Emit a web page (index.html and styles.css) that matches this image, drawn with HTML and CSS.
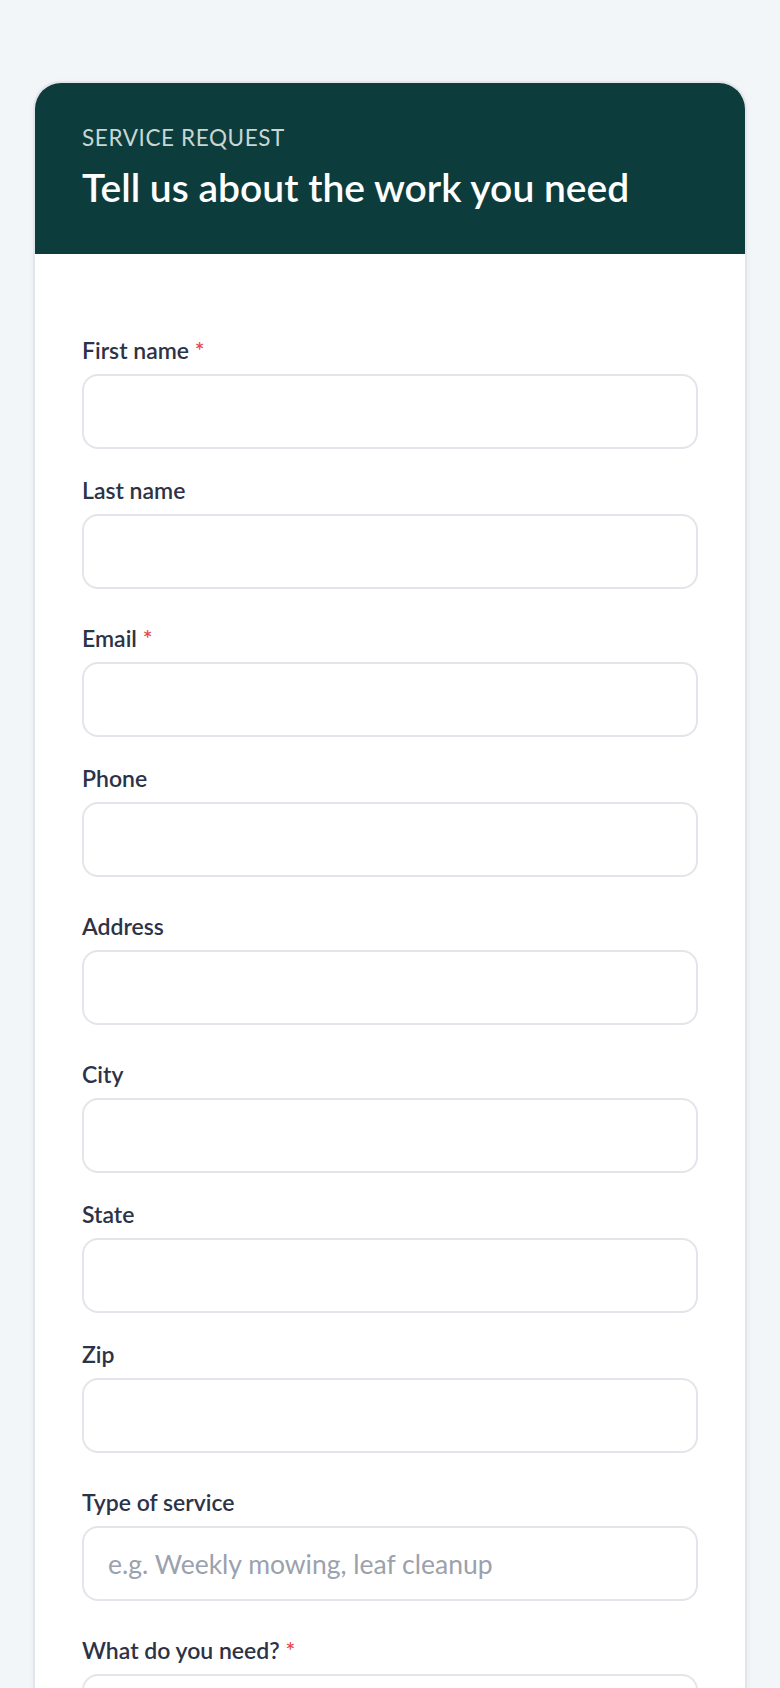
FILE: index.html
```html
<!DOCTYPE html>
<html lang="en">
<head>
    <meta charset="UTF-8">
    <meta name="viewport" content="width=device-width, initial-scale=1.0">
    <title>Service request</title>
    <link rel="stylesheet" href="styles.css">
</head>
<body>
    <div class="card">
        <header>
            <p class="eyebrow">Service request</p>
            <h1>Tell us about the work you need</h1>
        </header>
        <form class="requestForm">
            <div class="fieldGroup">
                <div class="field">
                    <label for="firstName">First name <span class="required">*</span></label>
                    <input id="firstName" type="text">
                </div>
                <div class="field">
                    <label for="lastName">Last name</label>
                    <input id="lastName" type="text">
                </div>
            </div>
            <div class="fieldGroup">
                <div class="field">
                    <label for="email">Email <span class="required">*</span></label>
                    <input id="email" type="email">
                </div>
                <div class="field">
                    <label for="phone">Phone</label>
                    <input id="phone" type="tel">
                </div>
            </div>
            <div class="field">
                <label for="address">Address</label>
                <input id="address" type="text">
            </div>
            <div class="fieldGroup">
                <div class="field">
                    <label for="city">City</label>
                    <input id="city" type="text">
                </div>
                <div class="field">
                    <label for="state">State</label>
                    <input id="state" type="text">
                </div>
                <div class="field">
                    <label for="zip">Zip</label>
                    <input id="zip" type="text">
                </div>
            </div>
            <div class="field">
                <label for="serviceType">Type of service</label>
                <input id="serviceType" type="text" placeholder="e.g. Weekly mowing, leaf cleanup">
            </div>
            <div class="field">
                <label for="details">What do you need? <span class="required">*</span></label>
                <textarea id="details" rows="5"></textarea>
            </div>
        </form>
    </div>
</body>
</html>
```

FILE: styles.css
```css
* {
    box-sizing: border-box;
}

body {
    margin: 0;
    padding: 81px 33px 40px;
    background-color: #f3f6f9;
    font-family: "Lato", "Noto Sans", sans-serif;
    color: #2d3346;
}

.card {
    background-color: #fff;
    border: 2px solid #e2e5ea;
    border-radius: 28px;
    overflow: hidden;
    box-shadow: 0 2px 6px rgba(20, 30, 50, 0.05);
}

header {
    background-color: #0d3c3d;
    padding: 40px 47px 43px;
}

.eyebrow {
    margin: 0;
    font-size: 22.5px;
    line-height: 30px;
    letter-spacing: 0.6px;
    text-transform: uppercase;
    color: #c6d7d4;
}

h1 {
    margin: 10px 0 0;
    font-size: 39px;
    line-height: 48px;
    font-weight: 600;
    color: #fff;
}

.requestForm {
    display: flex;
    flex-direction: column;
    gap: 34px;
    padding: 81px 47px 48px;
}

.fieldGroup {
    display: flex;
    flex-direction: column;
    gap: 26px;
}

.field label {
    display: block;
    margin-bottom: 9px;
    font-size: 23px;
    line-height: 30px;
    font-weight: 600;
    color: #2d3346;
}

.required {
    color: #e5484d;
}

.field input,
.field textarea {
    display: block;
    width: 100%;
    height: 75px;
    padding: 0 24px;
    border: 2px solid #e3e5ea;
    border-radius: 16px;
    background-color: #fff;
    font-family: inherit;
    font-size: 26.5px;
    color: #2d3346;
}

.field textarea {
    height: 180px;
    padding: 20px 24px;
    resize: vertical;
}

.field input::placeholder {
    color: #9ba1ad;
}
```
